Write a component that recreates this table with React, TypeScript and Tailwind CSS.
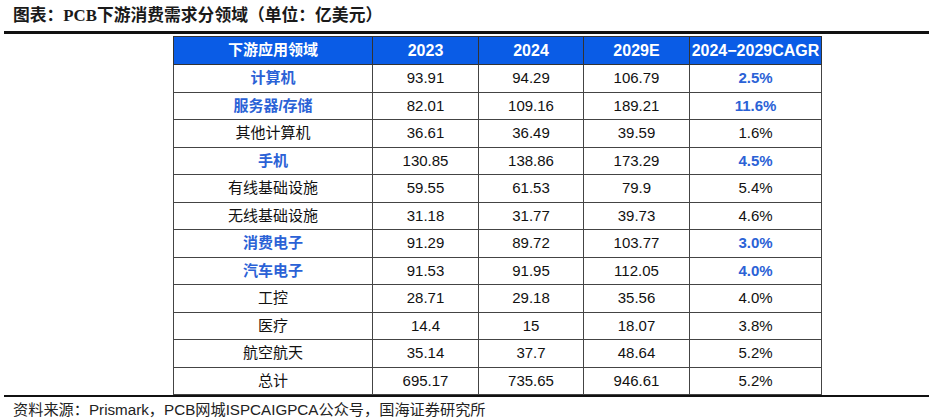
// PCB下游消费需求分领域 - 表格截图复刻

const rows: { name: string; v23: string; v24: string; v29: string; cagr: string; hl?: boolean }[] = [
  { name: '计算机', v23: '93.91', v24: '94.29', v29: '106.79', cagr: '2.5%', hl: true },
  { name: '服务器/存储', v23: '82.01', v24: '109.16', v29: '189.21', cagr: '11.6%', hl: true },
  { name: '其他计算机', v23: '36.61', v24: '36.49', v29: '39.59', cagr: '1.6%' },
  { name: '手机', v23: '130.85', v24: '138.86', v29: '173.29', cagr: '4.5%', hl: true },
  { name: '有线基础设施', v23: '59.55', v24: '61.53', v29: '79.9', cagr: '5.4%' },
  { name: '无线基础设施', v23: '31.18', v24: '31.77', v29: '39.73', cagr: '4.6%' },
  { name: '消费电子', v23: '91.29', v24: '89.72', v29: '103.77', cagr: '3.0%', hl: true },
  { name: '汽车电子', v23: '91.53', v24: '91.95', v29: '112.05', cagr: '4.0%', hl: true },
  { name: '工控', v23: '28.71', v24: '29.18', v29: '35.56', cagr: '4.0%' },
  { name: '医疗', v23: '14.4', v24: '15', v29: '18.07', cagr: '3.8%' },
  { name: '航空航天', v23: '35.14', v24: '37.7', v29: '48.64', cagr: '5.2%' },
  { name: '总计', v23: '695.17', v24: '735.65', v29: '946.61', cagr: '5.2%' },
];

const font = "font-['Liberation_Sans','Noto_Sans_CJK_SC',sans-serif]";

export default function App() {
  return (
    <div className={`w-[929px] h-[420px] bg-white overflow-hidden ${font} text-[#111]`}>
      {/* 标题 */}
      <div className="pl-[13px] h-[31px] flex items-center text-[16.8px] font-bold text-[#1a1a1a]">
        图表：<span className="font-['Liberation_Serif',serif]">PCB</span>下游消费需求分领域（单位：亿美元）
      </div>
      <div className="ml-[4px] h-[3px] bg-[#111]" />

      {/* 表格 */}
      <div className="pt-[2px] pl-[173px]">
        <table className="border-collapse table-fixed text-[15px]">
          <colgroup>
            <col className="w-[199px]" />
            <col className="w-[106px]" />
            <col className="w-[105px]" />
            <col className="w-[106px]" />
            <col className="w-[132px]" />
          </colgroup>
          <thead>
            <tr className="h-[28px] bg-[#0a5ce6] text-white font-bold">
              <th className="border border-[#333] p-0 font-bold">下游应用领域</th>
              <th className="border border-[#333] p-0 text-[16px] font-bold">2023</th>
              <th className="border border-[#333] p-0 text-[16px] font-bold">2024</th>
              <th className="border border-[#333] p-0 text-[16px] font-bold">2029E</th>
              <th className="border border-[#333] p-0 text-[16px] font-bold whitespace-nowrap">2024−2029CAGR</th>
            </tr>
          </thead>
          <tbody>
            {rows.map((r) => (
              <tr key={r.name} className="h-[27.5px]">
                <td className={`border border-[#444] p-0 text-center ${r.hl ? 'font-bold text-[#2b62d6]' : ''}`}>
                  {r.name}
                </td>
                <td className="border border-[#444] p-0 text-center">{r.v23}</td>
                <td className="border border-[#444] p-0 text-center">{r.v24}</td>
                <td className="border border-[#444] p-0 text-center">{r.v29}</td>
                <td className={`border border-[#444] p-0 text-center ${r.hl ? 'font-bold text-[#2b62d6]' : ''}`}>
                  {r.cagr}
                </td>
              </tr>
            ))}
          </tbody>
        </table>
      </div>
      <div className="ml-[4px] h-[2px] bg-[#111]" />

      {/* 资料来源 */}
      <div className="pl-[13px] pt-[3px] text-[15.2px] leading-[20px] text-[#222]">
        资料来源：Prismark，PCB网城ISPCAIGPCA公众号，国海证券研究所
      </div>
    </div>
  );
}
